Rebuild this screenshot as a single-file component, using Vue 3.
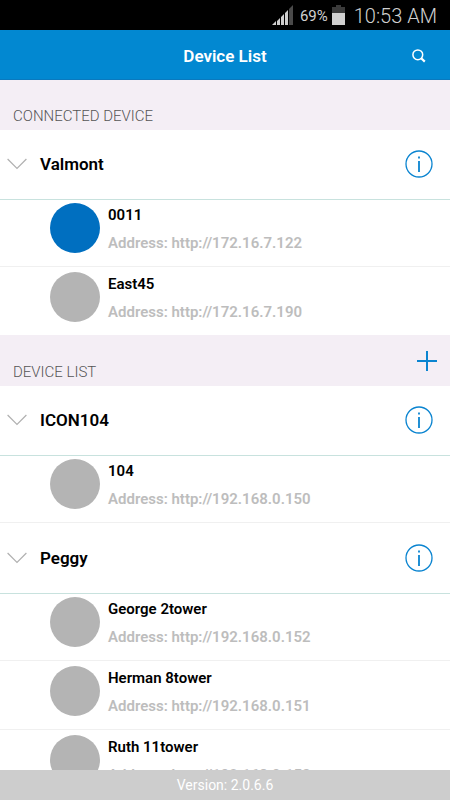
<script setup>
import { reactive } from 'vue'

const sections = reactive([
  {
    title: 'CONNECTED DEVICE',
    canAdd: false,
    groups: [
      {
        name: 'Valmont',
        open: true,
        devices: [
          { name: '0011', address: 'http://172.16.7.122', active: true },
          { name: 'East45', address: 'http://172.16.7.190' }
        ]
      }
    ]
  },
  {
    title: 'DEVICE LIST',
    canAdd: true,
    groups: [
      {
        name: 'ICON104',
        open: true,
        devices: [{ name: '104', address: 'http://192.168.0.150' }]
      },
      {
        name: 'Peggy',
        open: true,
        devices: [
          { name: 'George 2tower', address: 'http://192.168.0.152' },
          { name: 'Herman 8tower', address: 'http://192.168.0.151' },
          { name: 'Ruth 11tower', address: 'http://192.168.0.153' }
        ]
      }
    ]
  }
])
</script>

<template>
  <div class="screen">
    <div class="status">
      <svg class="signal" width="22" height="22" viewBox="0 0 22 22" aria-hidden="true">
        <path d="M0 21 L4 17 V21 Z M5 17 L8 14 V21 H5 Z M9 13 L12 10 V21 H9 Z M13 9 L16 6 V21 H13 Z" fill="#cfcfcf" />
        <path d="M17 5 L21 1 V21 H17 Z" fill="#4a4a4a" />
      </svg>
      <span class="percent">69%</span>
      <svg class="battery" width="13" height="20" viewBox="0 0 13 20" aria-hidden="true">
        <path d="M4 0 H9 V2 H13 V8 H0 V2 H4 Z" fill="#3b3b3b" />
        <rect y="8" width="13" height="12" fill="#d0d0d0" />
      </svg>
      <span class="clock">10:53 AM</span>
    </div>

    <header class="bar">
      <h1>Device List</h1>
      <button class="search" type="button" aria-label="Search">
        <svg width="14" height="14" viewBox="0 0 14 14" fill="none" stroke="#fff">
          <circle cx="5.8" cy="5.8" r="4.9" stroke-width="1.5" />
          <path d="M9.2 9.2 L12.8 12.6" stroke-width="2.2" />
        </svg>
      </button>
    </header>

    <main class="content">
      <section v-for="section in sections" :key="section.title">
        <div class="section-head" :class="{ tall: section.canAdd }">
          <h2>{{ section.title }}</h2>
          <button v-if="section.canAdd" class="add" type="button" aria-label="Add device">
            <svg width="20" height="20" viewBox="0 0 20 20" stroke="#0a84d0" stroke-width="2">
              <path d="M10 0 V20 M0 10 H20" />
            </svg>
          </button>
        </div>

        <div v-for="group in section.groups" :key="group.name" class="group">
          <div class="group-head">
            <button class="toggle" type="button" :aria-expanded="group.open" @click="group.open = !group.open">
              <svg :class="{ closed: !group.open }" width="20" height="12" viewBox="0 0 20 12" fill="none" stroke="#b0b0b0" stroke-width="1.2" aria-hidden="true">
                <path d="M0.6 1 L10 10.4 L19.4 1" />
              </svg>
              <span>{{ group.name }}</span>
            </button>
            <button class="info" type="button" :aria-label="`About ${group.name}`">
              <svg width="28" height="28" viewBox="0 0 28 28">
                <circle cx="14" cy="14" r="13" fill="none" stroke="#0a84d0" stroke-width="1.3" />
                <path d="M14 11 V22 M14 6.5 V8.5" stroke="#0a84d0" stroke-width="1.8" />
              </svg>
            </button>
          </div>
          <ul v-if="group.open" class="devices">
            <li v-for="device in group.devices" :key="device.name" class="device">
              <span class="dot" :class="{ active: device.active }"></span>
              <div class="text">
                <p class="name">{{ device.name }}</p>
                <p class="address">Address: {{ device.address }}</p>
              </div>
            </li>
          </ul>
        </div>
      </section>
    </main>

    <footer class="version">Version: 2.0.6.6</footer>
  </div>
</template>

<style>
body {
  margin: 0;
  background: #fff;
}
</style>

<style scoped>
.screen {
  display: flex;
  flex-direction: column;
  height: 100vh;
  font-family: Roboto, "Liberation Sans", sans-serif;
  color: #000;
}
h1, h2, p, ul {
  margin: 0;
  padding: 0;
}
button {
  display: flex;
  align-items: center;
  margin: 0;
  padding: 0;
  border: 0;
  background: none;
  font: inherit;
  color: inherit;
  cursor: pointer;
}
svg {
  display: block;
  flex: none;
}
.status {
  display: flex;
  flex: none;
  justify-content: flex-end;
  align-items: center;
  height: 30px;
  padding-right: 13px;
  background: #000;
  color: #d0d0d0;
}
.percent {
  margin: 2px 4px 0 6px;
  font-size: 15px;
}
.clock {
  margin: 2px 0 0 9px;
  font-size: 20px;
  font-weight: 300;
}
.bar {
  display: grid;
  flex: none;
  grid-template-columns: 1fr auto 1fr;
  align-items: center;
  box-sizing: border-box;
  height: 50px;
  padding: 2px 24px 0;
  border-bottom: 1px solid #0a79be;
  background: #0288d1;
  color: #fff;
}
.bar h1 {
  grid-column: 2;
  font-size: 17px;
  font-weight: 600;
}
.search {
  justify-self: end;
}
.content {
  flex: 1;
  min-height: 0;
  overflow-y: auto;
  scrollbar-width: none;
}
.section-head {
  display: flex;
  justify-content: space-between;
  align-items: flex-end;
  box-sizing: border-box;
  height: 50px;
  padding: 0 13px 4px;
  background: #f4eef5;
}
.section-head.tall {
  height: 51px;
}
.section-head h2 {
  font-size: 15px;
  font-weight: 300;
  line-height: 20px;
  color: #555;
}
.add {
  align-self: center;
  margin-top: 4px;
}
.group + .group {
  margin-top: 1px;
}
.group-head {
  display: flex;
  justify-content: space-between;
  box-sizing: border-box;
  height: 69px;
  padding: 0 17px 2px 7px;
}
.toggle {
  flex: 1;
  gap: 13px;
  font-size: 17px;
  font-weight: 600;
  text-align: left;
}
.closed {
  transform: rotate(-90deg);
}
.devices {
  border-top: 1px solid #c8e2de;
  list-style: none;
}
.device {
  display: flex;
  gap: 8px;
  padding: 5px 16px 13px 50px;
  border-bottom: 1px solid #f0f0f0;
}
.device:first-child {
  padding-top: 3px;
}
section:first-child .device:last-child {
  border-bottom: 0;
}
.dot {
  flex: none;
  width: 50px;
  height: 50px;
  border-radius: 50%;
  background: #b4b4b4;
}
.dot.active {
  background: #006fc0;
}
.text {
  display: flex;
  flex-direction: column;
  gap: 8px;
  padding-top: 2px;
  font-size: 15px;
  font-weight: 600;
  line-height: 20px;
}
.address {
  color: #bdbdbd;
}
.version {
  flex: none;
  background: #cdcdcd;
  color: #fff;
  font-size: 14px;
  line-height: 30px;
  text-align: center;
}
</style>
